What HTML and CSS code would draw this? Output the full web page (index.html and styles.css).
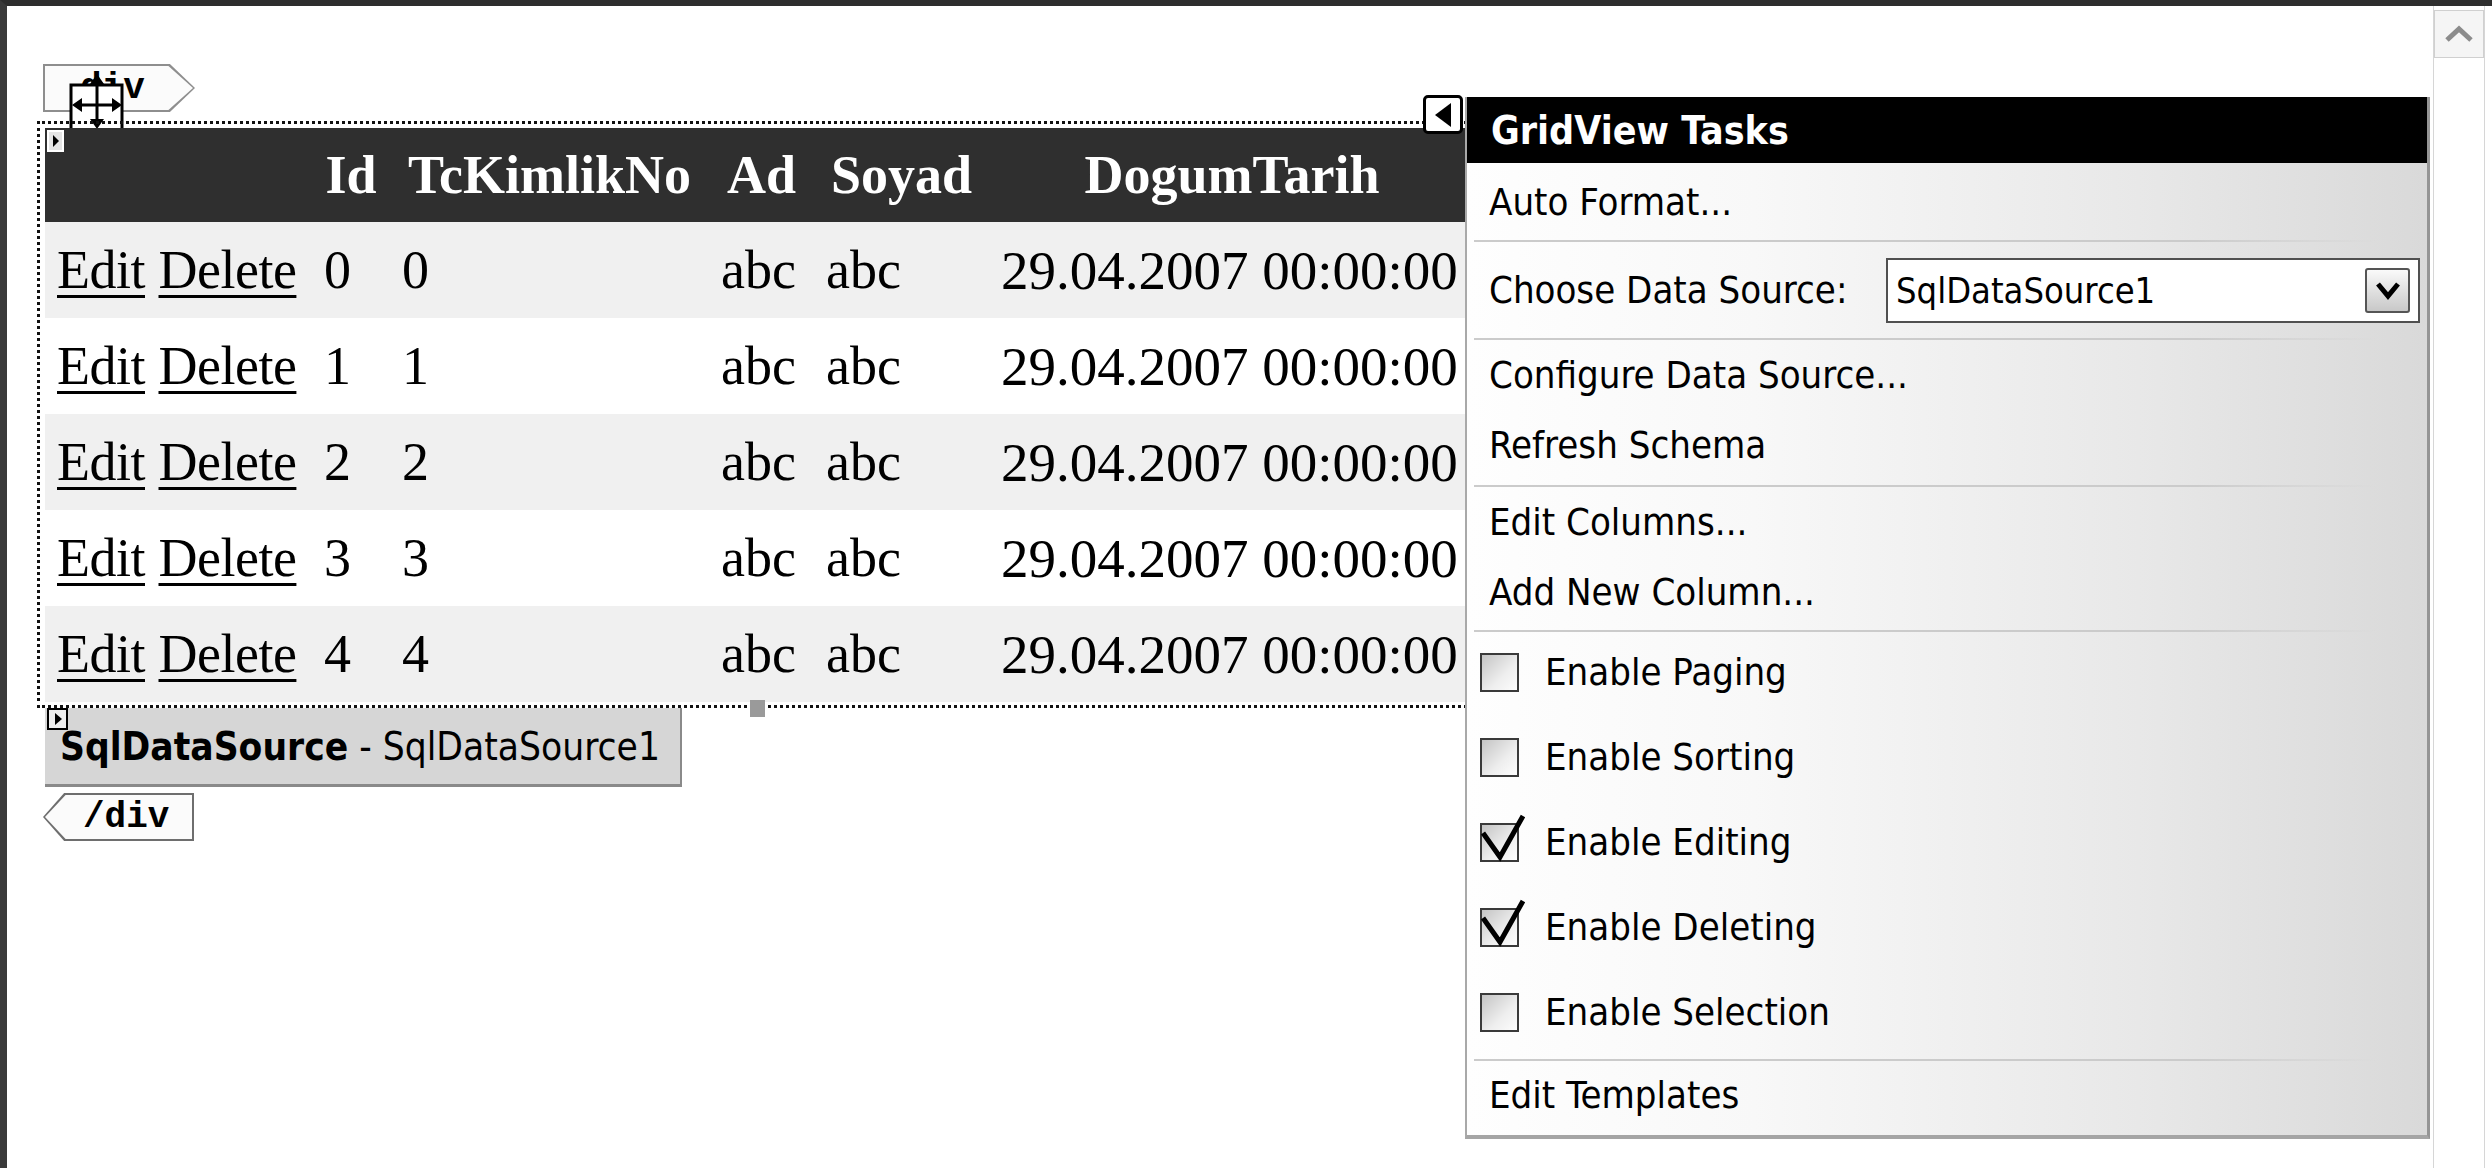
FILE: index.html
```html
<!DOCTYPE html>
<html>
<head>
<meta charset="utf-8">
<title>GridView Tasks</title>
<link rel="stylesheet" href="styles.css">
</head>
<body>
<div class="window">
  <div class="canvas">
    <div class="tag tag-open"><div class="tag-in">div</div></div>
    <svg class="move-icon" width="56" height="64" viewBox="0 0 56 64">
      <rect x="2" y="13" width="51" height="48" fill="#fff" stroke="#000" stroke-width="3"/>
      <path d="M28 6 V54 M7 33 H49" stroke="#000" stroke-width="3"/>
      <path d="M28 2 L21 12 H35 Z M28 57 L21 47 H35 Z M3 33 L13 26 V40 Z M53 33 L43 26 V40 Z" fill="#000"/>
    </svg>

    <div class="grid-sel">
      <svg class="mini-tag" width="17" height="22" viewBox="0 0 17 22">
        <rect x="1" y="1" width="15" height="20" fill="#e4e4e4" stroke="#fff" stroke-width="2"/>
        <path d="M6 5 L12 11 L6 17 Z" fill="#000"/>
      </svg>
      <table class="grid">
        <colgroup>
          <col class="c-cmd"><col class="c-id"><col class="c-tc"><col class="c-ad"><col class="c-soyad"><col class="c-date">
        </colgroup>
        <thead>
          <tr><th></th><th>Id</th><th>TcKimlikNo</th><th>Ad</th><th>Soyad</th><th>DogumTarih</th></tr>
        </thead>
        <tbody>
          <tr><td><a href="#">Edit</a> <a href="#">Delete</a></td><td>0</td><td>0</td><td>abc</td><td>abc</td><td class="date">29.04.2007 00:00:00</td></tr>
          <tr><td><a href="#">Edit</a> <a href="#">Delete</a></td><td>1</td><td>1</td><td>abc</td><td>abc</td><td class="date">29.04.2007 00:00:00</td></tr>
          <tr><td><a href="#">Edit</a> <a href="#">Delete</a></td><td>2</td><td>2</td><td>abc</td><td>abc</td><td class="date">29.04.2007 00:00:00</td></tr>
          <tr><td><a href="#">Edit</a> <a href="#">Delete</a></td><td>3</td><td>3</td><td>abc</td><td>abc</td><td class="date">29.04.2007 00:00:00</td></tr>
          <tr><td><a href="#">Edit</a> <a href="#">Delete</a></td><td>4</td><td>4</td><td>abc</td><td>abc</td><td class="date">29.04.2007 00:00:00</td></tr>
        </tbody>
      </table>
      <span class="resize-handle"></span>
    </div>

    <div class="sds">
      <svg class="sds-glyph" width="22" height="22" viewBox="0 0 22 22">
        <rect x="1" y="1" width="19" height="20" fill="#eee" stroke="#000" stroke-width="2"/>
        <path d="M8 5 L15 11 L8 17 Z" fill="#000"/>
      </svg>
      <b>SqlDataSource</b>&nbsp;- SqlDataSource1
    </div>

    <div class="tag tag-close"><div class="tag-in">/div</div></div>

    <div class="smart-btn"><span class="tri-left"></span></div>

    <div class="tasks">
      <div class="tasks-head">GridView Tasks</div>
      <div class="sec sec-auto"><div class="item">Auto Format...</div></div>
      <div class="sep"></div>
      <div class="sec sec-choose">
        <span class="choose-label">Choose Data Source:</span>
        <div class="dd">
          <span>SqlDataSource1</span>
          <span class="dd-btn">
            <svg width="30" height="22" viewBox="0 0 30 22"><path d="M5 5 L15 17 L25 5" fill="none" stroke="#000" stroke-width="5"/></svg>
          </span>
        </div>
      </div>
      <div class="sep"></div>
      <div class="sec sec-ds">
        <div class="item">Configure Data Source...</div>
        <div class="item">Refresh Schema</div>
      </div>
      <div class="sep"></div>
      <div class="sec sec-cols">
        <div class="item">Edit Columns...</div>
        <div class="item">Add New Column...</div>
      </div>
      <div class="sep"></div>
      <div class="sec sec-checks">
        <div class="chk-item"><span class="cb"></span>Enable Paging</div>
        <div class="chk-item"><span class="cb"></span>Enable Sorting</div>
        <div class="chk-item"><span class="cb checked"><svg class="tick" width="48" height="52" viewBox="0 0 48 52"><path d="M3 22 L20 46 L43 5" fill="none" stroke="#000" stroke-width="5"/></svg></span>Enable Editing</div>
        <div class="chk-item"><span class="cb checked"><svg class="tick" width="48" height="52" viewBox="0 0 48 52"><path d="M3 22 L20 46 L43 5" fill="none" stroke="#000" stroke-width="5"/></svg></span>Enable Deleting</div>
        <div class="chk-item"><span class="cb"></span>Enable Selection</div>
      </div>
      <div class="sep"></div>
      <div class="sec sec-tpl"><div class="item">Edit Templates</div></div>
    </div>
  </div>

  <div class="vscroll">
    <div class="sb-up">
      <svg width="32" height="20" viewBox="0 0 32 20"><path d="M4 16 L16 5 L28 16" fill="none" stroke="#8c8c8c" stroke-width="5"/></svg>
    </div>
  </div>
</div>
</body>
</html>
```
FILE: styles.css
```css
* { box-sizing: border-box; }

html, body {
  margin: 0;
  padding: 0;
  background: #fff;
}

body {
  width: 2492px;
  height: 1168px;
  overflow: hidden;
}

.window {
  display: flex;
  height: 1168px;
  border-top: 6px solid #2e2e2e;
  border-left: 7px solid #3a3a3a;
  background: #fff;
}

.canvas {
  flex: 1;
  position: relative;
  padding: 58px 0 0 30px;
}

/* design-view tags */
.tag {
  height: 48px;
  padding: 2px;
  margin-left: 6px;
  background: #8e8e8e;
}

.tag-in {
  height: 100%;
  display: flex;
  align-items: center;
  background: #fbfbfb;
  font-family: "Liberation Mono", "Courier New", monospace;
  font-weight: bold;
  font-size: 36px;
  color: #000;
}

.tag-open {
  width: 152px;
  clip-path: polygon(0 0, 83.5% 0, 100% 50%, 83.5% 100%, 0 100%);
}

.tag-open .tag-in {
  padding-left: 35px;
  clip-path: polygon(0 0, 83.4% 0, 100% 50%, 83.4% 100%, 0 100%);
}

.tag-close {
  width: 151px;
  margin-top: 6px;
  background: #6e6e6e;
  clip-path: polygon(14% 0, 100% 0, 100% 100%, 14% 100%, 0 50%);
}

.tag-close .tag-in {
  padding-left: 38px;
  clip-path: polygon(14% 0, 100% 0, 100% 100%, 14% 100%, 0 50%);
}

.move-icon {
  position: absolute;
  left: 62px;
  top: 66px;
}

/* selected grid */
.grid-sel {
  position: relative;
  width: max-content;
  margin-top: 9px;
  border: 3px dotted #111;
  padding: 4px 0 3px 5px;
}

.mini-tag {
  position: absolute;
  left: 7px;
  top: 6px;
}

.resize-handle {
  position: absolute;
  left: 710px;
  top: 576px;
  width: 15px;
  height: 17px;
  background: #9a9a9a;
}

.grid {
  border-collapse: collapse;
  table-layout: fixed;
  width: 1430px;
  font-family: "Liberation Serif", "Times New Roman", serif;
  font-size: 54px;
  color: #000;
}

.c-cmd { width: 267px; }
.c-id { width: 78px; }
.c-tc { width: 319px; }
.c-ad { width: 105px; }
.c-soyad { width: 175px; }
.c-date { width: 486px; }

.grid th {
  height: 94px;
  padding: 0;
  background: #2f2f2f;
  color: #fff;
  font-weight: bold;
  text-align: center;
  white-space: nowrap;
}

.grid td {
  height: 96px;
  padding: 0 0 0 12px;
  white-space: nowrap;
  overflow: hidden;
  vertical-align: middle;
}

.grid td.date { font-size: 55px; }

.grid tbody tr:nth-child(odd) td { background: #f0f0f0; }
.grid tbody tr:nth-child(even) td { background: #fff; }

.grid a {
  color: #000;
  text-decoration: underline;
  text-decoration-thickness: 3px;
  text-underline-offset: 7px;
  letter-spacing: -0.5px;
}

/* data source control */
.sds {
  position: relative;
  display: flex;
  align-items: center;
  width: max-content;
  height: 79px;
  margin-left: 8px;
  padding: 0 20px 0 15px;
  background: #d6d6d6;
  border-right: 2px solid #8a8a8a;
  border-bottom: 3px solid #8a8a8a;
  font-family: "DejaVu Sans Condensed", "DejaVu Sans", sans-serif;
  font-size: 38.5px;
  color: #000;
  white-space: nowrap;
}

.sds-glyph {
  position: absolute;
  left: 2px;
  top: 0;
}

/* smart tag button */
.smart-btn {
  position: absolute;
  left: 1416px;
  top: 89px;
  width: 40px;
  height: 39px;
  border: 3px solid #000;
  border-radius: 5px;
  background: #fff;
  display: flex;
  align-items: center;
  justify-content: center;
}

.tri-left {
  width: 0;
  height: 0;
  border-top: 12px solid transparent;
  border-bottom: 12px solid transparent;
  border-right: 16px solid #000;
}

/* tasks panel */
.tasks {
  position: absolute;
  left: 1458px;
  top: 91px;
  width: 965px;
  border-left: 2px solid #a9a9a9;
  border-right: 3px solid #959595;
  border-bottom: 4px solid #a5a5a5;
  background: linear-gradient(to right, #fefefe 0%, #f8f8f8 30%, #e8e8e8 70%, #d9d9d9 100%);
  font-family: "DejaVu Sans Condensed", "DejaVu Sans", sans-serif;
  font-size: 38px;
  color: #000;
  white-space: nowrap;
}

.tasks-head {
  height: 66px;
  display: flex;
  align-items: center;
  padding-left: 24px;
  background: #000;
  color: #fff;
  font-weight: bold;
  font-size: 39px;
}

.item {
  height: 70px;
  display: flex;
  align-items: center;
  padding-left: 22px;
}

.sep {
  height: 2px;
  margin: 0 50px 0 7px;
  background: linear-gradient(to right, #cbcbcb 80%, rgba(203, 203, 203, 0));
}

.sec-auto { height: 77px; display: flex; align-items: center; }

.sec-choose {
  height: 96px;
  display: flex;
  align-items: center;
  justify-content: space-between;
  padding: 0 7px 0 22px;
}

.dd {
  width: 534px;
  height: 65px;
  display: flex;
  align-items: center;
  justify-content: space-between;
  padding: 0 8px;
  border: 2px solid #505050;
  background: #fff;
  font-size: 36px;
}

.dd-btn {
  width: 45px;
  height: 45px;
  display: flex;
  align-items: center;
  justify-content: center;
  border: 2px solid #555;
  border-radius: 3px;
  background: linear-gradient(#fafafa, #c8c8c8);
}

.sec-ds { height: 145px; }
.sec-cols { height: 143px; }
.sec-checks { height: 427px; }

.chk-item {
  height: 85px;
  display: flex;
  align-items: center;
  gap: 26px;
  padding-left: 13px;
  padding-bottom: 5px;
}

.cb {
  position: relative;
  flex: none;
  width: 39px;
  height: 39px;
  border: 2px solid #3a3a3a;
  background: linear-gradient(135deg, #c4c4c4, #eeeeee 60%, #fdfdfd);
}

.tick {
  position: absolute;
  left: -2px;
  top: -14px;
  overflow: visible;
}

.sec-tpl { height: 74px; }
.sec-tpl .item { height: 68px; }

/* vertical scrollbar */
.vscroll {
  width: 52px;
  margin-right: 7px;
  padding-top: 4px;
  border-left: 1px solid #d6d6d6;
  border-right: 1px solid #d6d6d6;
  background: #fff;
}

.sb-up {
  height: 48px;
  display: flex;
  align-items: center;
  justify-content: center;
  border: 1px solid #d0d0d0;
  background: #f5f5f5;
}
```
